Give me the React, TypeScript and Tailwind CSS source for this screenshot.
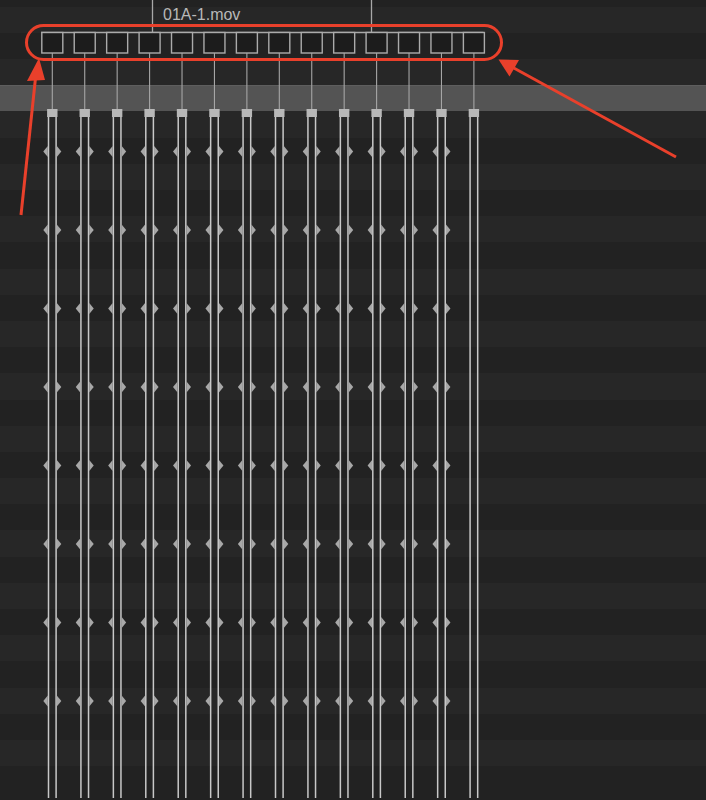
import React from "react";

const COLS = 14;
const X0 = 52.3;
const STEP = 32.43;
const KEY_Y = [151.5, 230, 308.5, 387, 465.5, 544, 622.5, 701];

function Bands() {
  const rows = Array.from({ length: 31 }, (_, i) => i);
  return (
    <div className="flex flex-col">
      {rows.map((i) => {
        const h = i === 0 ? "h-[6.7px]" : "h-[26.2px]";
        const bg =
          i === 4
            ? "bg-[#545454] border-t border-[#5e5e5e]"
            : i % 2
            ? "bg-[#272727]"
            : "bg-[#222222]";
        return <div key={i} className={`${h} ${bg} shrink-0`} />;
      })}
    </div>
  );
}

function Tracks() {
  const cols = Array.from({ length: COLS }, (_, i) => X0 + STEP * i);
  return (
    <svg className="absolute inset-0" width={706} height={800} viewBox="0 0 706 800">
      {/* parent links */}
      <line x1={152.5} y1={0} x2={152.5} y2={32} stroke="#a8a8a8" strokeWidth={1.3} />
      <line x1={371.5} y1={0} x2={371.5} y2={32} stroke="#a8a8a8" strokeWidth={1.3} />
      <line x1={41} y1={32.5} x2={483.5} y2={32.5} stroke="#a8a8a8" strokeWidth={1.4} />
      {cols.map((cx, i) => (
        <g key={i}>
          <rect x={cx - 10.5} y={32.5} width={21} height={20.5} fill="#1c1c1c" stroke="#ababab" strokeWidth={1.4} />
          <line x1={cx} y1={53} x2={cx} y2={110} stroke="#a6a6a6" strokeWidth={1.1} />
          <line x1={cx - 3.8} y1={116} x2={cx - 3.8} y2={798} stroke="#c8c8c8" strokeWidth={1.5} />
          <line x1={cx + 3.8} y1={116} x2={cx + 3.8} y2={798} stroke="#c8c8c8" strokeWidth={1.5} />
          <rect x={cx - 5.2} y={109} width={10.4} height={8} fill="#b8b8b8" />
          {i < COLS - 1 &&
            KEY_Y.map((y) => (
              <g key={y} fill="#a8a8a8">
                <polygon points={`${cx - 4.5},${y - 5.5} ${cx - 9},${y} ${cx - 4.5},${y + 5.5}`} />
                <polygon points={`${cx + 4.5},${y - 5.5} ${cx + 9},${y} ${cx + 4.5},${y + 5.5}`} />
              </g>
            ))}
        </g>
      ))}
    </svg>
  );
}

function Annotations() {
  return (
    <svg className="absolute inset-0 pointer-events-none" width={706} height={800} viewBox="0 0 706 800">
      <rect x={26.5} y={25.5} width={475} height={34} rx={17} fill="none" stroke="#e9402b" strokeWidth={3} />
      {/* left arrow */}
      <line x1={21} y1={215} x2={35.5} y2={78} stroke="#e9402b" strokeWidth={3} />
      <polygon points="39,58 27,81 45,80" fill="#e9402b" />
      {/* right arrow */}
      <line x1={676} y1={157} x2={512} y2={67} stroke="#e9402b" strokeWidth={3} />
      <polygon points="498.5,59.5 509.5,76.5 519,60" fill="#e9402b" />
    </svg>
  );
}

export default function App() {
  return (
    <div className="relative w-[706px] h-[800px] overflow-hidden bg-[#222222]">
      <Bands />
      <Tracks />
      <div className="absolute left-[163px] top-[5px] text-[16px] leading-[20px] text-[#b8b8b8] font-['Liberation_Sans',Arial,sans-serif]">
        01A-1.mov
      </div>
      <Annotations />
    </div>
  );
}
